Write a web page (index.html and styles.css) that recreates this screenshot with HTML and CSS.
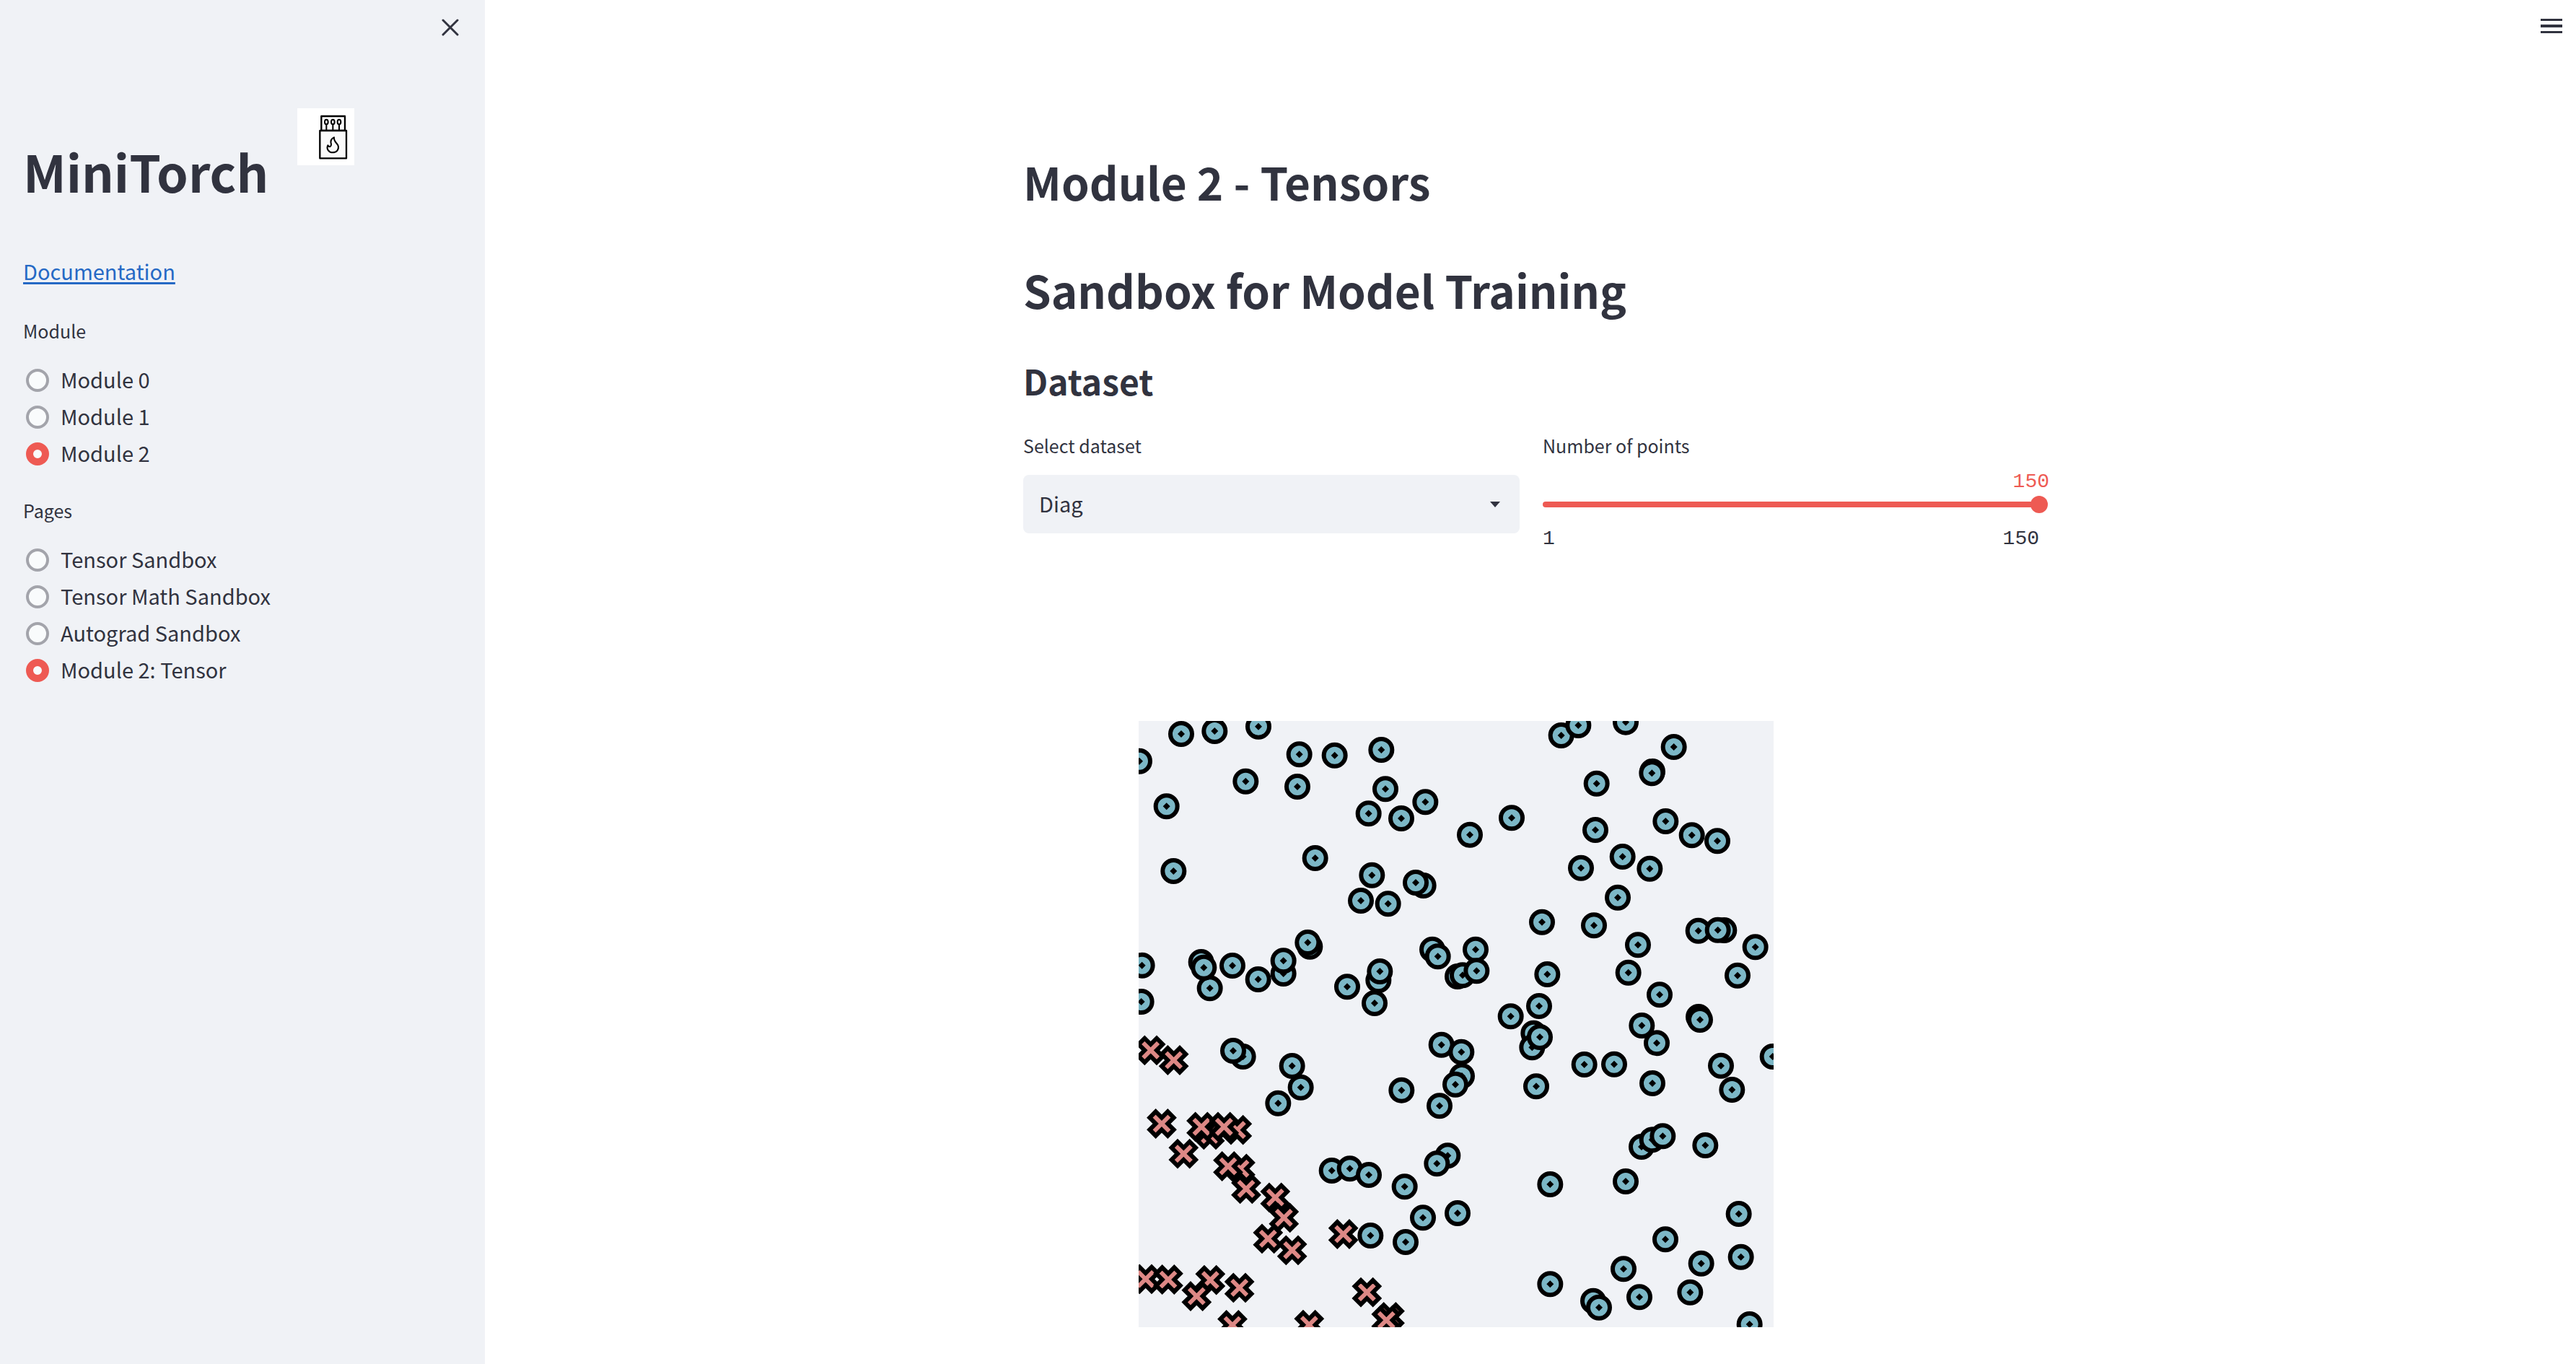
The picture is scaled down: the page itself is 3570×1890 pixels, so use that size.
FILE: index.html
```html
<!DOCTYPE html>
<html lang="en">
<head>
<meta charset="utf-8">
<title>MiniTorch</title>
<link rel="stylesheet" href="styles.css">
</head>
<body>
<div class="app">
  <aside class="sidebar">
    <div class="sidebar-top">
      <button class="icon-button" type="button" aria-label="Close sidebar">
        <svg width="24" height="24" viewBox="0 0 24 24" fill="none" stroke="currentColor" stroke-width="3" stroke-linecap="round"><path d="M2 2L22 22M22 2L2 22"/></svg>
      </button>
    </div>
    <div class="brand">
      <h1 class="brand-title">MiniTorch</h1>
      <svg class="brand-logo" viewBox="0 0 237 237" fill="none" stroke="#000" stroke-width="7" stroke-linejoin="round" stroke-linecap="round" role="img" aria-label="Matchbox">
        <rect x="100" y="33" width="98" height="60" fill="#fafafa"/>
        <rect x="94" y="93" width="110" height="115" fill="#fafafa"/>
        <g stroke-width="6">
          <ellipse cx="121" cy="57" rx="7" ry="10"/><path d="M121 67V93"/>
          <ellipse cx="148" cy="57" rx="7" ry="10"/><path d="M148 67V93"/>
          <ellipse cx="174" cy="57" rx="7" ry="10"/><path d="M174 67V93"/>
        </g>
        <path stroke-width="6" d="M153 121C139 127 138 139 141 149C142 159 134 164 127 154C120 168 130 184 147 184C164 184 174 171 170 156C166 145 150 137 153 121Z"/>
      </svg>
    </div>
    <p class="docs"><a href="#docs">Documentation</a></p>
    <fieldset class="radio-group">
      <legend>Module</legend>
      <label class="radio"><input type="radio" name="module"><span>Module 0</span></label>
      <label class="radio"><input type="radio" name="module"><span>Module 1</span></label>
      <label class="radio"><input type="radio" name="module" checked><span>Module 2</span></label>
    </fieldset>
    <fieldset class="radio-group">
      <legend>Pages</legend>
      <label class="radio"><input type="radio" name="page"><span>Tensor Sandbox</span></label>
      <label class="radio"><input type="radio" name="page"><span>Tensor Math Sandbox</span></label>
      <label class="radio"><input type="radio" name="page"><span>Autograd Sandbox</span></label>
      <label class="radio"><input type="radio" name="page" checked><span>Module 2: Tensor</span></label>
    </fieldset>
  </aside>

  <main class="main">
    <header class="toolbar">
      <button class="icon-button" type="button" aria-label="Menu">
        <svg width="30" height="20" viewBox="0 0 30 20" fill="currentColor"><path d="M0 0h30v3H0zM0 8h30v4H0zM0 17h30v3H0z"/></svg>
      </button>
    </header>
    <div class="content">
      <h1 class="title">Module 2 - Tensors</h1>
      <h1 class="title">Sandbox for Model Training</h1>
      <h2 class="subtitle">Dataset</h2>
      <div class="controls">
        <div class="field">
          <label for="dataset">Select dataset</label>
          <div class="select">
            <select id="dataset"><option>Diag</option></select>
            <svg class="select-arrow" width="14" height="8" viewBox="0 0 14 8" fill="currentColor"><path d="M0 0H14L7 8Z"/></svg>
          </div>
        </div>
        <div class="field">
          <label for="points">Number of points</label>
          <output class="slider-value" for="points">150</output>
          <input class="slider" id="points" type="range" min="1" max="150" value="150">
          <div class="slider-ticks"><span>1</span><span>150</span></div>
        </div>
      </div>
      <svg class="plot" viewBox="0 0 2640 2520" role="img" aria-label="Dataset scatter plot">
        <defs>
          <g id="o"><circle r="45" fill="#7cb7c6" stroke="#000" stroke-width="18"/><path d="M0 -15L15 0L0 15L-15 0Z"/></g>
          <path id="x" fill="#dd8885" stroke="#000" stroke-width="18" d="M0 25l25 25l25 -25l-25 -25l25 -25l-25 -25l-25 25l-25 -25l-25 25l25 25l-25 25l25 25Z"/>
        </defs>
        <g transform="translate(-24 -27)">
          <use href="#o" x="201" y="81"/><use href="#o" x="340" y="69"/><use href="#o" x="522" y="50"/><use href="#o" x="27" y="194"/>
          <use href="#o" x="692" y="166"/><use href="#o" x="839" y="170"/><use href="#o" x="1033" y="147"/><use href="#o" x="469" y="278"/>
          <use href="#o" x="684" y="300"/><use href="#o" x="140" y="382"/><use href="#o" x="1050" y="310"/><use href="#o" x="980" y="412"/>
          <use href="#o" x="1116" y="432"/><use href="#o" x="1216" y="364"/><use href="#o" x="758" y="597"/><use href="#o" x="169" y="651"/>
          <use href="#o" x="994" y="668"/><use href="#o" x="948" y="774"/><use href="#o" x="1061" y="787"/><use href="#o" x="1208" y="711"/>
          <use href="#o" x="1176" y="699"/><use href="#o" x="736" y="965"/><use href="#o" x="727" y="948"/><use href="#o" x="38" y="1043"/>
          <use href="#o" x="35" y="1194"/><use href="#o" x="284" y="1029"/><use href="#o" x="320" y="1138"/><use href="#o" x="295" y="1052"/>
          <use href="#o" x="414" y="1044"/><use href="#o" x="521" y="1101"/><use href="#o" x="626" y="1077"/><use href="#o" x="626" y="1024"/>
          <use href="#o" x="891" y="1132"/><use href="#o" x="1021" y="1105"/><use href="#o" x="1027" y="1068"/><use href="#o" x="1005" y="1200"/>
          <use href="#o" x="1245" y="977"/><use href="#o" x="1268" y="1006"/>
        </g>
        <g transform="translate(1296 -27)">
          <use href="#o" x="461" y="87"/><use href="#o" x="532" y="45"/><use href="#o" x="729" y="32"/><use href="#o" x="929" y="135"/>
          <use href="#o" x="840" y="237"/><use href="#o" x="838" y="244"/><use href="#o" x="608" y="287"/><use href="#o" x="255" y="430"/>
          <use href="#o" x="81" y="500"/><use href="#o" x="895" y="444"/><use href="#o" x="603" y="480"/><use href="#o" x="1004" y="502"/>
          <use href="#o" x="1110" y="526"/><use href="#o" x="716" y="591"/><use href="#o" x="543" y="638"/><use href="#o" x="829" y="641"/>
          <use href="#o" x="696" y="761"/><use href="#o" x="381" y="863"/><use href="#o" x="597" y="877"/><use href="#o" x="1138" y="897"/>
          <use href="#o" x="1031" y="899"/><use href="#o" x="1112" y="896"/><use href="#o" x="780" y="958"/><use href="#o" x="1268" y="967"/>
          <use href="#o" x="740" y="1073"/><use href="#o" x="1194" y="1085"/><use href="#o" x="30" y="1089"/><use href="#o" x="51" y="1084"/>
          <use href="#o" x="105" y="977"/><use href="#o" x="109" y="1066"/><use href="#o" x="403" y="1080"/><use href="#o" x="870" y="1165"/>
          <use href="#o" x="369" y="1212"/><use href="#o" x="251" y="1255"/><use href="#o" x="1032" y="1257"/><use href="#o" x="1038" y="1269"/>
        </g>
        <g transform="translate(-24 1233)">
          <use href="#o" x="458" y="162"/><use href="#o" x="417" y="138"/><use href="#o" x="662" y="201"/><use href="#o" x="698" y="290"/>
          <use href="#o" x="604" y="356"/><use href="#o" x="1117" y="302"/><use href="#o" x="1283" y="113"/><use href="#o" x="1275" y="367"/>
          <use href="#o" x="827" y="636"/><use href="#o" x="902" y="628"/><use href="#o" x="981" y="654"/><use href="#o" x="1130" y="703"/>
          <use href="#o" x="1309" y="574"/><use href="#o" x="1264" y="607"/><use href="#o" x="1206" y="832"/><use href="#o" x="988" y="906"/>
          <use href="#o" x="1134" y="933"/>
        </g>
        <g transform="translate(1296 1233)">
          <use href="#o" x="796" y="33"/><use href="#o" x="858" y="106"/><use href="#o" x="1125" y="200"/><use href="#o" x="1171" y="300"/>
          <use href="#o" x="1340" y="162"/><use href="#o" x="346" y="65"/><use href="#o" x="340" y="124"/><use href="#o" x="372" y="81"/>
          <use href="#o" x="357" y="286"/><use href="#o" x="557" y="195"/><use href="#o" x="681" y="194"/><use href="#o" x="840" y="273"/>
          <use href="#o" x="46" y="143"/><use href="#o" x="48" y="243"/><use href="#o" x="21" y="278"/><use href="#o" x="795" y="537"/>
          <use href="#o" x="839" y="508"/><use href="#o" x="883" y="493"/><use href="#o" x="1060" y="531"/><use href="#o" x="415" y="693"/>
          <use href="#o" x="729" y="681"/><use href="#o" x="1199" y="816"/><use href="#o" x="894" y="922"/><use href="#o" x="1208" y="995"/>
          <use href="#o" x="1043" y="1022"/><use href="#o" x="720" y="1045"/><use href="#o" x="30" y="813"/><use href="#o" x="415" y="1108"/>
          <use href="#o" x="594" y="1178"/><use href="#o" x="618" y="1205"/><use href="#o" x="786" y="1162"/><use href="#o" x="997" y="1142"/>
          <use href="#o" x="1244" y="1275"/>
        </g>
        <g transform="translate(-24 1233)">
          <use href="#x" x="74" y="136"/><use href="#x" x="170" y="177"/><use href="#x" x="120" y="441"/><use href="#x" x="211" y="566"/>
          <use href="#x" x="320" y="487"/><use href="#x" x="433" y="467"/><use href="#x" x="285" y="454"/><use href="#x" x="379" y="454"/>
          <use href="#x" x="447" y="628"/><use href="#x" x="396" y="618"/><use href="#x" x="471" y="712"/><use href="#x" x="592" y="748"/>
          <use href="#x" x="628" y="832"/><use href="#x" x="562" y="919"/><use href="#x" x="662" y="967"/><use href="#x" x="875" y="900"/>
          <use href="#x" x="53" y="1087"/><use href="#x" x="147" y="1089"/><use href="#x" x="322" y="1091"/><use href="#x" x="443" y="1123"/>
          <use href="#x" x="265" y="1158"/><use href="#x" x="973" y="1142"/><use href="#x" x="1068" y="1245"/><use href="#x" x="1054" y="1258"/>
          <use href="#x" x="414" y="1278"/><use href="#x" x="733" y="1277"/>
        </g>
      </svg>
    </div>
  </main>
</div>
</body>
</html>
```
FILE: styles.css
```css
* {
  box-sizing: border-box;
}

body {
  margin: 0;
  background: #fff;
  color: #31333f;
  font-family: "Noto Sans CJK SC", "Noto Sans", sans-serif;
  font-size: 29px;
}

h1, h2, p {
  margin: 0;
}

.app {
  display: flex;
  min-height: 100vh;
}

.icon-button {
  display: grid;
  place-items: center;
  width: 48px;
  height: 48px;
  padding: 0;
  border: 0;
  background: none;
  color: inherit;
}

/* Sidebar */
.sidebar {
  flex: 0 0 672px;
  padding: 14px 24px 32px 32px;
  background: #f0f2f6;
}

.sidebar-top {
  display: flex;
  justify-content: flex-end;
}

.brand {
  display: flex;
  gap: 40px;
  align-items: flex-start;
  margin-top: 88px;
}

.brand-title {
  margin-top: 43px;
  font-size: 70px;
  line-height: 88px;
  font-weight: 700;
}

.brand-logo {
  width: 79px;
  height: 79px;
  background: #fff;
}

.docs {
  margin-top: 68px;
  line-height: 52px;
}

.docs a {
  color: #2569c5;
  text-decoration-thickness: 3px;
  text-underline-offset: 3px;
}

.radio-group {
  margin: 37px 0 0;
  padding: 0;
  border: 0;
}

.radio-group + .radio-group {
  margin-top: 33px;
}

.radio-group legend {
  margin-bottom: 23px;
  padding: 0;
  font-size: 25px;
  line-height: 40px;
}

.radio {
  display: flex;
  gap: 16px;
  align-items: center;
  height: 51px;
  padding-left: 4px;
}

.radio span {
  padding-bottom: 4px;
}

.radio input {
  appearance: none;
  width: 32px;
  height: 32px;
  margin: 0;
  border: 4px solid #a3a4ab;
  border-radius: 50%;
  background: #f9fbfc;
}

.radio input:checked {
  border: 10px solid #ee5a53;
}

/* Main column */
.main {
  flex: 1;
  min-width: 0;
}

.toolbar {
  display: flex;
  justify-content: flex-end;
  padding: 12px 10px 0 0;
}

.content {
  max-width: 1472px;
  margin: 0 auto;
  padding: 146px 31px 48px 33px;
}

.title {
  margin-bottom: 60px;
  font-size: 62px;
  line-height: 90px;
  font-weight: 700;
}

.title + .title {
  margin-bottom: 48px;
}

.subtitle {
  margin-bottom: 37px;
  font-size: 48px;
  line-height: 66px;
  font-weight: 700;
}

.controls {
  display: grid;
  grid-template-columns: 1fr 1fr;
  gap: 32px;
}

.field label {
  display: block;
  font-size: 25px;
  line-height: 40px;
}

.select {
  position: relative;
  margin-top: 21px;
}

.select select {
  appearance: none;
  display: block;
  width: 100%;
  height: 81px;
  padding: 0 64px 4px 22px;
  border: 0;
  border-radius: 8px;
  background: #f0f2f6;
  color: inherit;
  font: inherit;
}

.select-arrow {
  position: absolute;
  top: 37px;
  right: 27px;
  pointer-events: none;
}

.slider-value,
.slider-ticks {
  font-family: "Liberation Mono", monospace;
  font-size: 28px;
  line-height: 32px;
}

.slider-value {
  display: block;
  margin: 15px -14px 3px 0;
  color: #ee5a53;
  text-align: right;
}

/* The thumb is centred on the end of the track, so the input runs 12px past it. */
.slider {
  appearance: none;
  display: block;
  width: calc(100% + 12px);
  height: 24px;
  margin: 0;
  background: none;
}

.slider::-webkit-slider-runnable-track {
  height: 8px;
  border-radius: 4px;
  background: linear-gradient(#ee5a53, #ee5a53) 0 0 / calc(100% - 12px) 100% no-repeat;
}

.slider::-webkit-slider-thumb {
  appearance: none;
  width: 24px;
  height: 24px;
  margin-top: -8px;
  border-radius: 50%;
  background: #ee5a53;
}

.slider-ticks {
  display: flex;
  justify-content: space-between;
  margin-top: 20px;
}

.plot {
  display: block;
  width: 63%;
  max-width: 880px;
  margin: 236px 0 0 160px;
  background: #f0f2f6;
}
```
